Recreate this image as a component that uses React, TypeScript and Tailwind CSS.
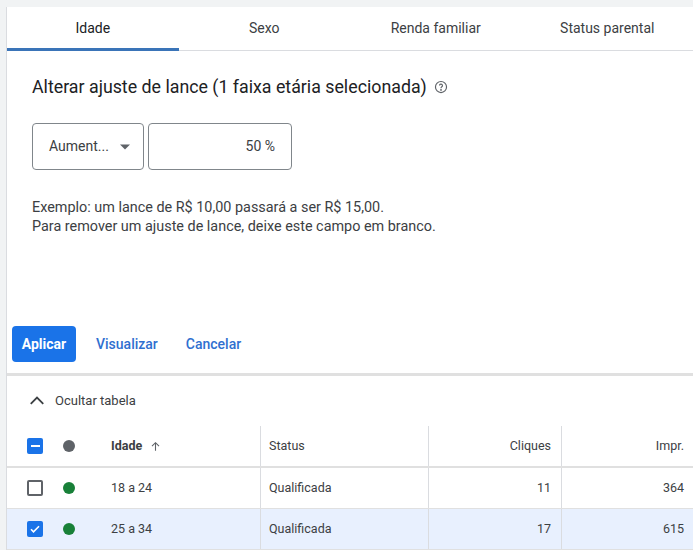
const tabs = ["Idade", "Sexo", "Renda familiar", "Status parental"]

const rows = [
  { idade: "18 a 24", status: "Qualificada", cliques: "11", impr: "364", checked: false },
  { idade: "25 a 34", status: "Qualificada", cliques: "17", impr: "615", checked: true },
]

function Checkbox({ state }: { state: "on" | "off" | "mixed" }) {
  if (state === "off") {
    return <span className="block h-[16px] w-[16px] rounded-[2px] border-2 border-[#5f6368] bg-white" />
  }
  return (
    <span className="flex h-[16px] w-[16px] items-center justify-center rounded-[2px] bg-[#1a73e8]">
      {state === "mixed" ? (
        <span className="block h-[2px] w-[9px] bg-white" />
      ) : (
        <svg width="12" height="12" viewBox="0 0 24 24" fill="none" stroke="white" strokeWidth="3.2">
          <path d="M4 12.5l5 5L20 6.5" />
        </svg>
      )}
    </span>
  )
}

export default function App() {
  return (
    <div
      className="h-[550px] w-[693px] overflow-hidden bg-[#f1f3f4] pl-[6px] pt-[7px] text-[#3c4043]"
      style={{ fontFamily: "Roboto, 'Liberation Sans', sans-serif" }}
    >
      <div className="flex h-full flex-col border-l border-[#dadce0] bg-white">
        {/* tabs */}
        <div className="grid h-[45px] grid-cols-4 border-b border-[#dadce0]">
          {tabs.map((t, i) => (
            <div
              key={t}
              className={`relative flex items-center justify-center text-[14px] ${i === 0 ? "text-[#202124]" : "text-[#3c4043]"}`}
            >
              {t}
              {i === 0 && <span className="absolute bottom-[-1px] left-0 h-[3px] w-full bg-[#3a74b8]" />}
            </div>
          ))}
        </div>

        <div className="pl-[25px] pt-[24px]">
          <div className="flex items-center gap-[7px]">
            <h1 className="text-[17.8px] leading-[24px] text-[#202124]">
              Alterar ajuste de lance (1 faixa etária selecionada)
            </h1>
            <svg width="14" height="14" viewBox="0 0 24 24" fill="none" stroke="#5f6368" strokeWidth="2">
              <circle cx="12" cy="12" r="9.5" />
              <path d="M9.5 9.5a2.5 2.5 0 1 1 3.5 2.3c-.7.4-1 .9-1 1.7v.5" />
              <circle cx="12" cy="17" r="0.6" fill="#5f6368" />
            </svg>
          </div>

          <div className="mt-[24px] flex gap-[4px]">
            <div className="flex h-[47px] w-[112px] items-center justify-between rounded-[4px] border border-[#80868b] pl-[16px] pr-[13px] text-[14px] text-[#3c4043]">
              <span>Aument...</span>
              <svg width="10" height="6" viewBox="0 0 10 5">
                <path d="M0 0h10L5 5z" fill="#5f6368" />
              </svg>
            </div>
            <div className="flex h-[47px] w-[144px] items-center justify-end rounded-[4px] border border-[#80868b] pr-[16px] text-[14px] text-[#3c4043]">
              50 %
            </div>
          </div>

          <div className="mt-[28px] text-[14.4px] leading-[19px] text-[#3c4043]">
            <p>Exemplo: um lance de R$ 10,00 passará a ser R$ 15,00.</p>
            <p>Para remover um ajuste de lance, deixe este campo em branco.</p>
          </div>
        </div>

        <div className="mt-[90px] flex items-center pl-[5px]">
          <button className="h-[36px] w-[64px] rounded-[4px] bg-[#1a73e8] text-[14px] font-bold text-white">
            Aplicar
          </button>
          <button className="ml-[20px] text-[14px] font-medium text-[#2f6fd0]">Visualizar</button>
          <button className="ml-[28px] text-[14px] font-medium text-[#2f6fd0]">Cancelar</button>
        </div>

        <div className="mt-[11px] h-[3px] bg-[#e0e0e0]" />

        <div className="flex h-[51px] items-center pl-[20px] text-[13px] text-[#3c4043]">
          <svg width="20" height="20" viewBox="0 0 24 24" fill="none" stroke="#3c4043" strokeWidth="2.2">
            <path d="M4.5 15.5l7.5-7.5 7.5 7.5" />
          </svg>
          <span className="ml-[8px]">Ocultar tabela</span>
        </div>

        {/* table */}
        <div className="text-[12.5px] text-[#3c4043]">
          <div className="grid h-[42px] grid-cols-[45px_48px_160px_168px_133px_132px] border-b-2 border-[#e0e0e0]">
            <div className="flex items-center pl-[20px]">
              <Checkbox state="mixed" />
            </div>
            <div className="flex items-center pl-[11px]">
              <span className="block h-[12px] w-[12px] rounded-full bg-[#5f6368]" />
            </div>
            <div className="flex items-center gap-[7px] pl-[11px] font-bold text-[#3c4043]">
              Idade
              <svg width="13" height="13" viewBox="0 0 24 24" fill="none" stroke="#5f6368" strokeWidth="2">
                <path d="M12 20V5M5.5 11.5L12 5l6.5 6.5" />
              </svg>
            </div>
            <div className="flex items-center border-l border-[#dadce0] pl-[8px]">Status</div>
            <div className="flex items-center justify-end border-l border-[#dadce0] pr-[10px]">Cliques</div>
            <div className="flex items-center justify-end border-l border-[#dadce0] pr-[9px]">Impr.</div>
          </div>
          {rows.map((r) => (
            <div
              key={r.idade}
              className={`grid h-[41px] grid-cols-[45px_48px_160px_168px_133px_132px] border-b border-[#e0e0e0] ${r.checked ? "bg-[#e8f0fe]" : "bg-white"}`}
            >
              <div className="flex items-center pl-[20px]">
                <Checkbox state={r.checked ? "on" : "off"} />
              </div>
              <div className="flex items-center pl-[11px]">
                <span className="block h-[12px] w-[12px] rounded-full bg-[#188038]" />
              </div>
              <div className="flex items-center pl-[11px]">{r.idade}</div>
              <div className="flex items-center border-l border-[#dadce0] pl-[8px]">{r.status}</div>
              <div className="flex items-center justify-end border-l border-[#dadce0] pr-[10px]">{r.cliques}</div>
              <div className="flex items-center justify-end border-l border-[#dadce0] pr-[9px]">{r.impr}</div>
            </div>
          ))}
        </div>
      </div>
    </div>
  )
}
